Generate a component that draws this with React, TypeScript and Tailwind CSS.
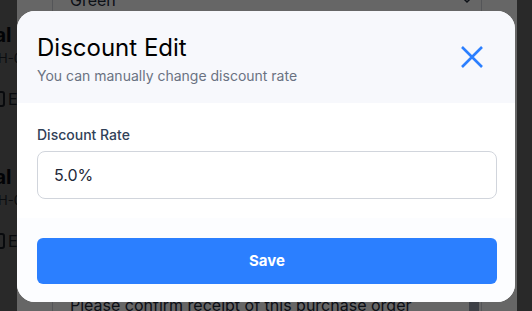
import React from "react";

function CloseIcon() {
  return (
    <svg width="24" height="24" viewBox="0 0 24 24" fill="none" stroke="currentColor" strokeWidth="2.6" strokeLinecap="butt">
      <path d="M2 2 L22 22 M22 2 L2 22" />
    </svg>
  );
}

export default function App() {
  return (
    <div
      className="relative w-[532px] h-[311px] overflow-hidden bg-white"
      style={{ fontFamily: "Inter, 'Noto Sans', sans-serif" }}
    >
      {/* underlying page */}
      <div className="flex flex-col pt-[21px] -ml-[37px] gap-[54px] text-gray-900">
        {[0, 1].map((i) => (
          <div key={i} className="flex flex-col">
            <div className="text-[20px] font-bold leading-[28px]">Total</div>
            <div className="text-[13px] leading-[18px] text-gray-600 pl-[35px]">H-0012</div>
            <div className="flex items-center gap-[3px] pl-[30px] mt-[22px] h-[20px] text-[16px] text-gray-700">
              <span className="inline-block w-[12px] h-[16px] rounded-[3px] border-2 border-gray-700"></span>
              <span>Edit</span>
            </div>
          </div>
        ))}
      </div>

      {/* first overlay */}
      <div className="absolute inset-0 bg-black/60"></div>

      {/* first modal (underneath) */}
      <div className="absolute left-[17px] top-[-60px] w-[500px] h-[420px] bg-white flex flex-col px-[35px]">
        <div className="mt-[40px] h-[44px] border border-gray-300 rounded-md flex items-center justify-between pl-[17px] pr-[8px] text-[16px] text-gray-800">
          <span>Green</span>
          <svg width="12" height="12" viewBox="0 0 24 24" fill="none" stroke="currentColor" strokeWidth="3">
            <path d="M5 9l7 7 7-7" />
          </svg>
        </div>
        <div className="mt-[265px] h-[80px] border border-gray-300 rounded-md flex pl-[17px] pt-[6px] pr-[2px] text-[16px] text-gray-800 justify-between">
          <span>Please confirm receipt of this purchase order</span>
          <span className="w-[10px] h-full bg-gray-400"></span>
        </div>
      </div>

      {/* second overlay */}
      <div className="absolute inset-0 bg-black/60"></div>

      {/* dialog */}
      <div className="absolute left-[17px] top-[11px] w-[498px] h-[291px] rounded-[18px] bg-white overflow-hidden flex flex-col">
        <div className="bg-[#f7f8fc] h-[92px] pl-[20px] pr-[31px] pt-[21px] flex justify-between">
          <div className="flex flex-col">
            <h2 className="text-[24px] leading-[32px] text-black font-normal">Discount Edit</h2>
            <p className="mt-[2px] text-[14px] leading-[20px] text-gray-500">You can manually change discount rate</p>
          </div>
          <button className="text-blue-500 mt-[13px] h-[24px]">
            <CloseIcon />
          </button>
        </div>
        <div className="flex flex-col pl-[20px] pr-[18px] pt-[22px] pb-[19px]">
          <label className="text-[14px] leading-[20px] font-medium text-slate-700">Discount Rate</label>
          <div className="mt-[6px] h-[48px] border border-gray-300 rounded-lg flex items-center px-4 text-[16px] text-gray-800">
            5.0%
          </div>
        </div>
        <div className="flex-1 bg-[#fcfdff] pl-[20px] pr-[18px] pt-[20px]">
          <button className="w-full h-[46px] rounded-md bg-blue-500 text-white text-[15px] font-bold">Save</button>
        </div>
      </div>
    </div>
  );
}
